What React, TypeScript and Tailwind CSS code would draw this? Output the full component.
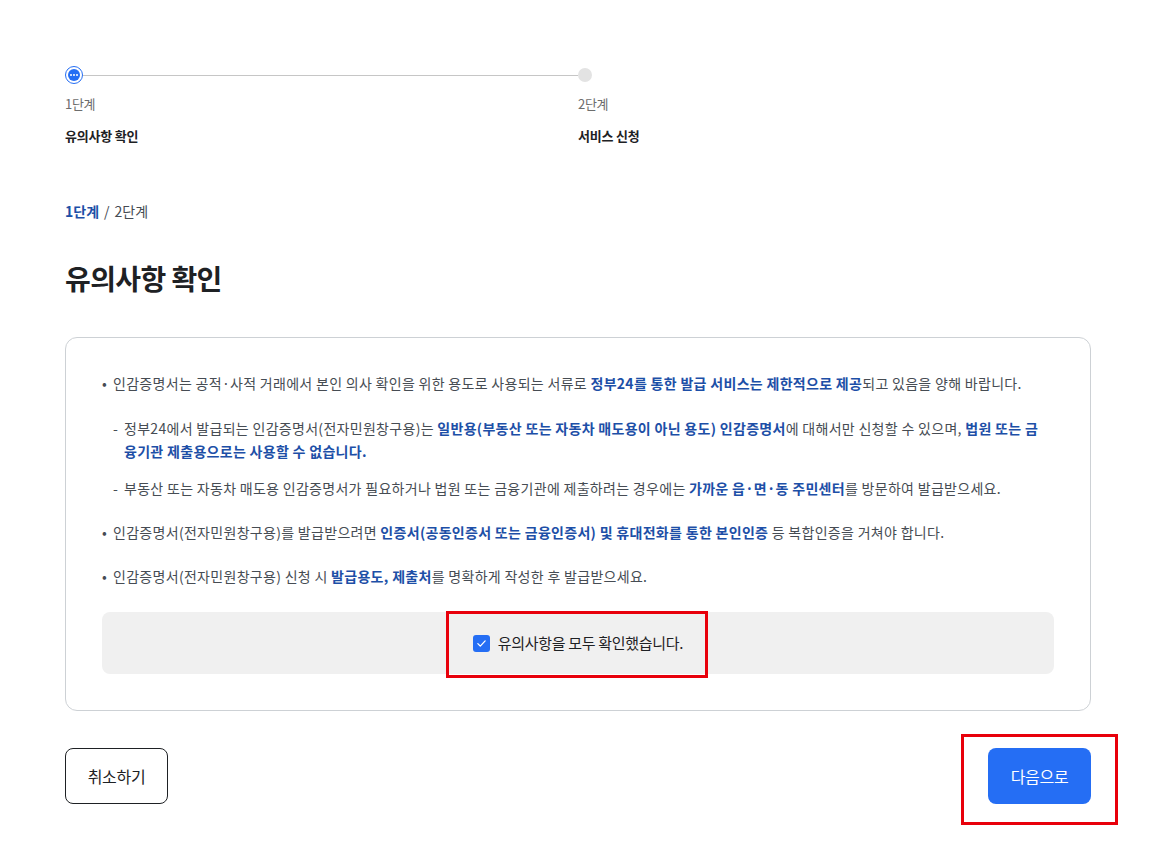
import React from 'react'

const font = { fontFamily: '"Noto Sans CJK KR", "Noto Sans", sans-serif' }

function B({ children }: { children: React.ReactNode }) {
  return <strong className="font-bold text-[#1d4fa7]">{children}</strong>
}

function Item({
  mark,
  children,
}: {
  mark: string
  children: React.ReactNode
}) {
  return (
    <li className="flex">
      <span className="w-[11px] shrink-0">{mark}</span>
      <div className="flex-1">{children}</div>
    </li>
  )
}

export default function App() {
  return (
    <div className="min-h-[860px] bg-white text-[#1e2124]" style={font}>
      <div className="w-[1026px] ml-[65px] pt-[66px] pb-10">
        {/* step indicator */}
        <div className="grid grid-cols-2">
          <div>
            <div className="flex items-center">
              <span className="flex size-[18px] items-center justify-center rounded-full border-[1.5px] border-[#256ef4] bg-white">
                <span className="flex size-[12px] items-center justify-center gap-[1px] rounded-full bg-[#256ef4]">
                  <span className="size-[2px] rounded-full bg-white" />
                  <span className="size-[2px] rounded-full bg-white" />
                  <span className="size-[2px] rounded-full bg-white" />
                </span>
              </span>
              <span className="h-px flex-1 bg-[#c6c6c6]" />
            </div>
            <p className="mt-[10px] text-[13px] leading-5 tracking-[-0.3px] text-[#6d6d6d]">
              1단계
            </p>
            <p className="mt-3 text-[13px] font-bold leading-5 tracking-[-0.2px] text-[#1e2124]">
              유의사항 확인
            </p>
          </div>
          <div>
            <div className="flex h-[18px] items-center">
              <span className="size-[14px] rounded-full bg-[#e3e3e3]" />
            </div>
            <p className="mt-[10px] text-[13px] leading-5 tracking-[-0.3px] text-[#6d6d6d]">
              2단계
            </p>
            <p className="mt-3 text-[13px] font-bold leading-5 tracking-[-0.2px] text-[#1e2124]">
              서비스 신청
            </p>
          </div>
        </div>

        {/* breadcrumb */}
        <p className="mt-[55px] text-[14px] leading-5 text-[#464c53]">
          <span className="font-bold text-[#1d4fa7]">1단계</span>
          <span className="mx-[5px]">/</span>
          <span>2단계</span>
        </p>

        <h1 className="mt-[37px] text-[28px] font-bold leading-10 tracking-[-0.6px] text-[#1e2124]">
          유의사항 확인
        </h1>

        {/* notice box */}
        <div className="mt-[39px] rounded-xl border border-[#cdd1d5] px-9 pt-[34px] pb-[36px]">
          <ul className="space-y-[21px] text-[14px] leading-[23px] tracking-[0.3px] text-[#464c53]">
            <Item mark="•">
              <p>
                인감증명서는 공적·사적 거래에서 본인 의사 확인을 위한 용도로 사용되는 서류로{' '}
                <B>정부24를 통한 발급 서비스는 제한적으로 제공</B>되고 있음을 양해 바랍니다.
              </p>
              <ul className="mt-[22px] space-y-[14px]">
                <Item mark="-">
                  정부24에서 발급되는 인감증명서(전자민원창구용)는{' '}
                  <B>일반용(부동산 또는 자동차 매도용이 아닌 용도) 인감증명서</B>에 대해서만
                  신청할 수 있으며, <B>법원 또는 금<br />융기관 제출용으로는 사용할 수 없습니다.</B>
                </Item>
                <Item mark="-">
                  부동산 또는 자동차 매도용 인감증명서가 필요하거나 법원 또는 금융기관에
                  제출하려는 경우에는 <B>가까운 읍·면·동 주민센터</B>를 방문하여 발급받으세요.
                </Item>
              </ul>
            </Item>
            <Item mark="•">
              인감증명서(전자민원창구용)를 발급받으려면{' '}
              <B>인증서(공동인증서 또는 금융인증서) 및 휴대전화를 통한 본인인증</B> 등
              복합인증을 거쳐야 합니다.
            </Item>
            <Item mark="•">
              인감증명서(전자민원창구용) 신청 시 <B>발급용도, 제출처</B>를 명확하게 작성한 후
              발급받으세요.
            </Item>
          </ul>

          <div className="relative mt-[24px] flex h-[62px] items-center justify-center rounded-lg bg-[#f0f0f0]">
            <label className="flex items-center gap-2 text-[15px] tracking-[-0.3px] text-[#1e2124]">
              <span className="flex size-[17px] items-center justify-center rounded-[3px] bg-[#256ef4]">
                <svg viewBox="0 0 16 16" className="size-[13px]" fill="none">
                  <path
                    d="M3.5 8.2l3 3 6-6.4"
                    stroke="white"
                    strokeWidth="1.6"
                    strokeLinecap="round"
                    strokeLinejoin="round"
                  />
                </svg>
              </span>
              유의사항을 모두 확인했습니다.
            </label>
            <span className="pointer-events-none absolute left-[344px] top-[-1px] h-[67px] w-[262px] border-[3px] border-[#e8000b]" />
          </div>
        </div>

        {/* buttons */}
        <div className="mt-[37px] flex items-center justify-between">
          <button className="h-14 w-[103px] rounded-lg border border-[#1e2124] bg-white text-[16px] tracking-[-0.3px] text-[#1e2124]">
            취소하기
          </button>
          <div className="relative">
            <button className="h-14 w-[103px] rounded-lg bg-[#256ef4] text-[16px] tracking-[-0.3px] text-white">
              다음으로
            </button>
            <span className="pointer-events-none absolute left-[-27px] top-[-14px] h-[91px] w-[157px] border-[3px] border-[#e8000b]" />
          </div>
        </div>
      </div>
    </div>
  )
}
